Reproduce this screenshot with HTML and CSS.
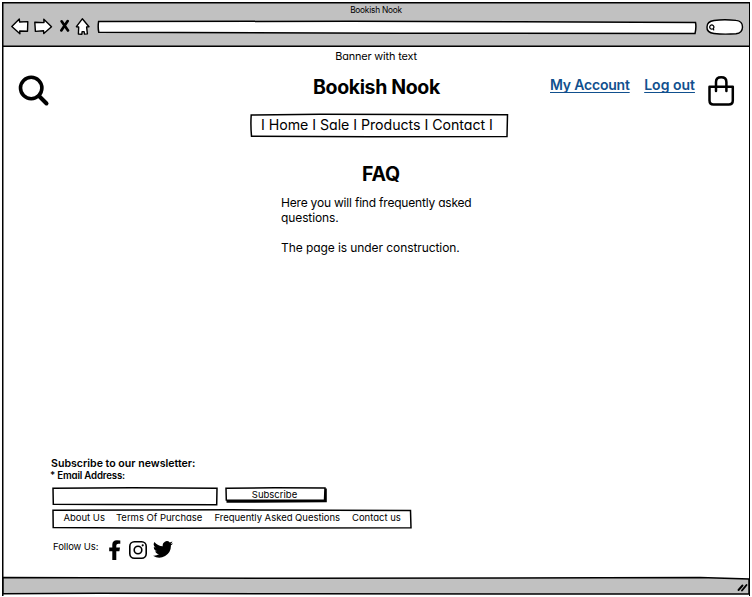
FILE: index.html
```html
<!DOCTYPE html>
<html lang="en">
<head>
<meta charset="utf-8">
<title>Bookish Nook</title>
<link rel="stylesheet" href="styles.css">
</head>
<body>
<div class="window">
  <header class="chrome">
    <div class="chrome-title">Bookish Nook</div>
    <div class="toolbar">
      <svg class="controls" width="80" height="22" viewBox="10 14 80 22">
        <g fill="#fff" stroke="#000" stroke-width="1.4" stroke-linejoin="round">
          <path d="M11.8 24.5 19.3 17l.3 3 8.2-.4-.3 9.7-7.8-.3.2 2.7Z"/>
          <path d="M34.8 20.3l9.2.3-.2-3.3 7.7 7.5-7.7 6.8-.2-2.9-8.2.7Z"/>
          <path d="M82.3 16.8 89 24.7l-2.4.2.8 7-2.9.2-.4-2.5h-2l-.2 2.6-3.5-.2.3-7-2.300-.300Z"/>
        </g>
        <path d="M61.600 19.300 68 28.500M67.700 19.100 61.300 28.400" stroke="#000" stroke-width="2.700" fill="none" stroke-linecap="round"/>
      </svg>
      <svg class="address" width="600" height="16" viewBox="97 20 600 16">
        <path d="M98.600 21.500 350 21.300 520 21.800 695.500 22.500Q696.500 27 695 33.600L400 33.200 98.800 32.300Q97.700 27 98.600 21.500Z" fill="#fff" stroke="#000" stroke-width="1.500"/>
      </svg>
      <svg class="search" width="40" height="18" viewBox="705 18 40 18">
        <path d="M707 27Q707 21.500 714 20.500 724 19 736 20.400 742.500 21 742.500 27 742.500 33 736 33.700 724 34.700 714 33.500 706.500 32.500 707 27Z" fill="#fff" stroke="#000" stroke-width="1.400"/>
        <path d="M713.300 28.600a2.100 2.100 0 1 1-3-3 2.100 2.100 0 0 1 3 3l.5 1.800" fill="none" stroke="#000" stroke-width="1.300"/>
      </svg>
    </div>
  </header>

  <main class="page">
    <p class="banner">Banner with text</p>
    <div class="masthead">
      <svg class="magnifier" width="32" height="32" viewBox="18 75 32 32"><circle cx="31.200" cy="88" r="10.700" fill="none" stroke="#000" stroke-width="3.600"/><path d="M39 96l7.500 7.500" stroke="#000" stroke-width="4" stroke-linecap="round"/></svg>
      <h1>Bookish Nook</h1>
      <nav class="account"><a class="my-account" href="#">My Account</a><a class="logout" href="#">Log out</a></nav>
      <svg class="bag" width="28" height="32" viewBox="707 75 28 32"><path d="M709.500 86.700h23.300v13.800q0 4-4 4h-15.300q-4 0-4-4ZM716 91v-9q0-4.700 5.200-4.700t5.200 4.700v9" fill="none" stroke="#000" stroke-width="2.500" stroke-linecap="round" stroke-linejoin="round"/></svg>
    </div>
    <nav class="menu">
      <svg class="outline" viewBox="0 0 259 25" preserveAspectRatio="none"><path d="M1.200 2 70 1.200 257.500 1.700 257 23.500 120 23.800 1.500 23.200Q.5 12 1.200 2Z"/></svg>
      <span class="menu-text">I Home I Sale I Products I Contact I</span>
    </nav>
    <section class="faq">
      <h2>FAQ</h2>
      <p class="line-one">Here you will find frequently asked<br><span>questions.</span></p>
      <p class="line-two">The page is under construction.</p>
    </section>
    <section class="newsletter">
      <h3>Subscribe to our newsletter:</h3>
      <label for="email">* Email Address:</label>
      <div class="form">
        <div class="field"><svg class="outline" viewBox="0 0 166 19" preserveAspectRatio="none"><path d="M1 1.300 80 .8 165 1.200 164.700 17.800 60 17.400 1.300 17.300Z"/></svg><input id="email" type="text"></div>
        <button type="button"><svg class="outline" viewBox="0 0 103 17" preserveAspectRatio="none"><path class="shade" d="M1.500 14.300 100.300 13.800V1.500"/><path d="M1 1.300 50 .8 100 1 99.500 13.300 1.300 13.100Z"/></svg><span>Subscribe</span></button>
      </div>
      <nav class="links">
        <svg class="outline" viewBox="0 0 360 20" preserveAspectRatio="none"><path d="M1 1.200 180 .8 358.500 1.500 359 18.700 120 19.200 1.200 18.500Z"/></svg>
        <span class="about">About Us</span><span class="terms">Terms Of Purchase</span><span class="questions">Frequently Asked Questions</span><span class="contact">Contact us</span>
      </nav>
      <div class="social">
        <span>Follow Us:</span>
        <svg class="facebook" width="12" height="20" viewBox="0 0 12 20"><path d="M3.300 20V11.200H.2V7.500H3.300V4.800Q3.300.2 7.900.2 10 .2 11.300.5V3.700H9.300Q7.300 3.700 7.300 5.500V7.500H11L10.400 11.200H7.300V20Z"/></svg>
        <svg class="instagram" width="18" height="18" viewBox="0 0 18 18"><g fill="none" stroke="#000" stroke-width="1.600"><rect x=".8" y=".8" width="16.400" height="16.400" rx="4.500"/><circle cx="9" cy="9" r="3.800"/></g><circle cx="13.700" cy="4.300" r="1.100"/></svg>
        <svg class="twitter" width="20" height="17" viewBox="0 0 24 20"><path d="M24 2.400a10 10 0 0 1-2.800.8A5 5 0 0 0 23.300.5a10 10 0 0 1-3.100 1.200 4.900 4.900 0 0 0-8.400 4.500A14 14 0 0 1 1.700 1a4.900 4.900 0 0 0 1.500 6.600A5 5 0 0 1 1 7a4.900 4.900 0 0 0 3.900 4.900 5 5 0 0 1-2.200.1 4.900 4.900 0 0 0 4.600 3.400A10 10 0 0 1 0 17.500 14 14 0 0 0 21.500 5a10 10 0 0 0 2.500-2.600Z"/></svg>
      </div>
    </section>
  </main>

  <footer class="status">
    <svg width="748" height="20" viewBox="2 576 748 20"><path d="M3 577.500 300 578.300 700 577.500 749 579V594L300 593.800 100 593.300 3 593.800Z" fill="#c1c1c1" stroke="#000" stroke-width="1.500"/><path d="M738.500 590 742.500 585.500M742 590.500 746.500 585" stroke="#000" stroke-width="1.900" stroke-linecap="round"/></svg>
  </footer>
</div>
</body>
</html>
```
FILE: styles.css
```css
* { box-sizing: border-box; }
body { margin: 0; background: #fff; color: #000; font-family: Inter, "Open Sans", sans-serif; font-feature-settings: "cv11" 1, "ss03" 1; }
h1, h2, h3, p { margin: 0; font-size: inherit; }
svg { display: block; flex: none; }
.window { width: 748px; height: 594px; margin: 2px 0 0 2px; display: flex; flex-direction: column; box-shadow: inset 1.500px 0 #000, inset -1px 0 #000; }
.chrome { height: 45px; background: #c1c1c1; border: 1px solid #000; flex: none; box-shadow: inset 0 .4px #000, inset 0 -.4px #000, inset .5px 0 #000; }
.chrome-title { height: 12px; margin-top: 1px; font-size: 8.300px; letter-spacing: -.22px; line-height: 12px; text-align: center; }
.toolbar { display: flex; align-items: flex-start; margin-left: 7px; }
.address { margin: 4px 8px 0 7px; }
.search { margin-top: 2px; }
.page { flex: 1; padding: 0 1px; display: flex; flex-direction: column; white-space: nowrap; }
.banner { height: 19px; line-height: 18px; font-size: 10.900px; letter-spacing: -.15px; text-align: center; }
.masthead { height: 46px; padding-top: 9px; display: grid; grid-template-columns: 32px 263px 236px 158px 28px; margin-left: 15px; }
.masthead h1 { padding-left: 263px; grid-column: 2; font-size: 19.500px; letter-spacing: -.36px; line-height: 24px; }
.account { grid-column: 4; display: flex; gap: 14.500px; padding-left: 1px; font-size: 14px; letter-spacing: -.2px; font-weight: 600; line-height: 20px; }
.account a { color: #11508e; text-underline-offset: 2px; text-decoration-thickness: 1px; text-decoration-skip-ink: none; }
.account .logout { letter-spacing: 0; }
.bag { grid-column: 5; }
.outline { position: absolute; inset: 0; width: 100%; height: 100%; fill: #fff; stroke: #000; stroke-width: 1.500; }
.outline .shade { fill: none; stroke-width: 3; }
.menu { position: relative; width: 259px; height: 25px; margin: 1px 0 0 247px; padding-left: 11px; line-height: 24px; font-size: 14.200px; letter-spacing: -.04px; }
.menu-text, button span, .links span { position: relative; }
.faq { width: 220px; margin: 24px 0 0 278px; font-size: 12px; line-height: 15px; }
.faq h2 { padding-left: 81px; height: 33px; font-size: 19.500px; letter-spacing: -.2px; line-height: 24px; }
.line-one { letter-spacing: -.2px; }
.line-one span { letter-spacing: -.1px; }
.line-two { margin-top: 15px; letter-spacing: -.08px; }
.newsletter { width: 362px; margin: auto 0 14px 48px; font-size: 9.500px; }
.newsletter h3 { font-size: 10.600px; letter-spacing: 0; line-height: 13px; font-weight: 600; }
.newsletter label { display: block; line-height: 11px; font-size: 9.700px; letter-spacing: -.18px; font-weight: 600; margin-left: -1px; }
.form { display: flex; gap: 7px; height: 22px; margin: 6px 0 0 1px; }
.field { position: relative; width: 166px; height: 19px; }
.field input { position: relative; width: 100%; height: 100%; padding: 0 5px; border: 0; background: transparent; }
button { position: relative; width: 103px; height: 17px; padding: 0 4px 2px 0; border: 0; background: none; color: #000; font: inherit; font-feature-settings: inherit; line-height: 15px; }
.links { position: relative; display: grid; grid-template-columns: 52.500px 98.500px 137.500px 49px; width: 360px; height: 20px; margin-left: 1px; padding-left: 11.500px; line-height: 18px; letter-spacing: -.02px; }
.social { display: flex; align-items: flex-start; height: 22px; margin: 11px 0 0 2px; }
.social span { width: 56px; letter-spacing: -.1px; line-height: 13px; }
.instagram { margin: 1px 6px 0 8px; }
.twitter { margin-top: 1px; }
.status { height: 20px; flex: none; }
```
